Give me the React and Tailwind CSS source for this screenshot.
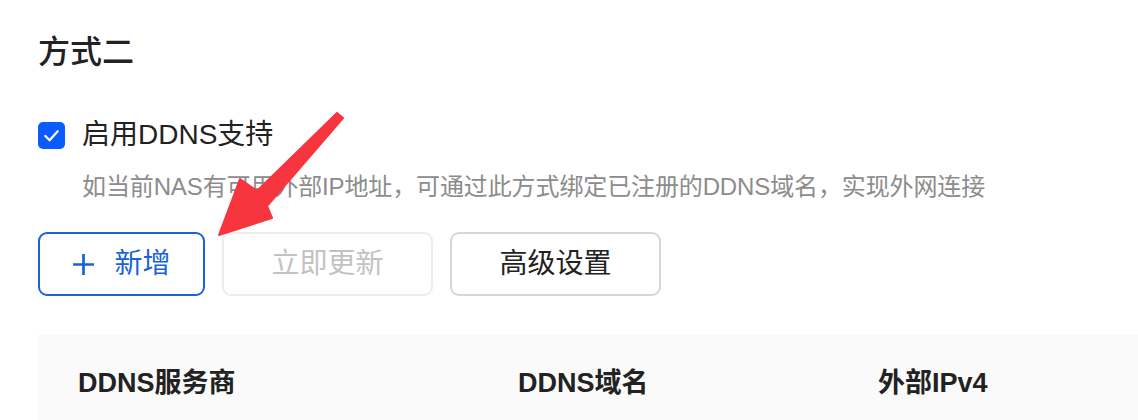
export default function App() {
  const font = { fontFamily: '"Liberation Sans", "Noto Sans CJK SC", sans-serif' };
  return (
    <div className="relative w-[1138px] h-[420px] overflow-hidden bg-white" style={font}>
      <div className="pl-[38px] pt-[30px]">
        <div className="text-[32px] leading-[44px] font-medium text-[#222222]">方式二</div>

        <div className="mt-[41px] flex items-center h-[40px]">
          <div className="w-[27px] h-[27px] rounded-[5px] bg-[#0b5cff] flex items-center justify-center">
            <svg width="19" height="19" viewBox="0 0 20 20" fill="none">
              <path d="M3.5 10.5 L8 15 L16.5 5.5" stroke="white" strokeWidth="2.4" strokeLinecap="round" strokeLinejoin="round" />
            </svg>
          </div>
          <div className="ml-[17px] text-[28px] leading-[40px] text-[#222222]">启用DDNS支持</div>
        </div>

        <div className="mt-[15px] ml-[44px] text-[24px] leading-[34px] tracking-[-0.12px] text-[#8c8c8c]">
          如当前NAS有可用外部IP地址，可通过此方式绑定已注册的DDNS域名，实现外网连接
        </div>

        <div className="mt-[28px] flex gap-[17px]">
          <div className="w-[167px] h-[64px] rounded-[9px] border-2 border-[#1a62d6] flex items-center justify-center text-[#1a62d6]">
            <svg width="23" height="23" viewBox="0 0 22 22" fill="none">
              <path d="M11 1 V21 M1 11 H21" stroke="#1a62d6" strokeWidth="2.6" />
            </svg>
            <span className="ml-[19px] text-[28px] leading-[40px]">新增</span>
          </div>
          <div className="w-[211px] h-[64px] rounded-[9px] border-2 border-[#ececec] flex items-center justify-center text-[28px] text-[#c2c2c2]">
            立即更新
          </div>
          <div className="w-[211px] h-[64px] rounded-[9px] border-2 border-[#d6d6d6] flex items-center justify-center text-[28px] text-[#222222]">
            高级设置
          </div>
        </div>

        <div className="mt-[39px] h-[96px] bg-[#fafafa] flex items-center pl-[40px] text-[27px] font-semibold text-[#222222]">
          <div className="w-[440px]">DDNS服务商</div>
          <div className="w-[360px]">DDNS域名</div>
          <div>外部IPv4</div>
        </div>
      </div>

      <svg className="absolute left-0 top-0 pointer-events-none" width="1138" height="420" viewBox="0 0 1138 420">
        <polygon
          points="219,235 240,179 257,191 337,113 343,118 267,206 272,218"
          fill="#f7353f"
          stroke="#f7353f"
          strokeWidth="2"
          strokeLinejoin="round"
        />
      </svg>
    </div>
  );
}
